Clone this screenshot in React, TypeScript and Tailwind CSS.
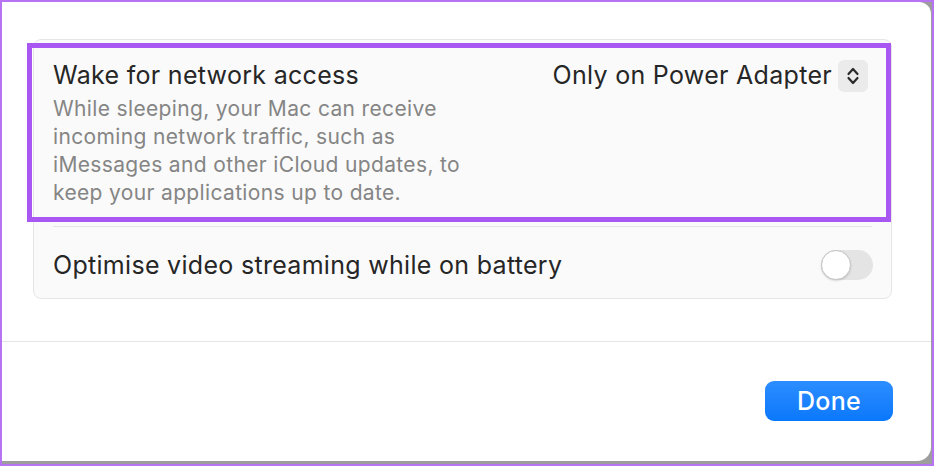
import React from "react";

function Stepper() {
  return (
    <span className="flex h-[32px] w-[30px] items-center justify-center rounded-[6px] bg-[#ebebeb]">
      <svg width="16" height="24" viewBox="0 0 16 24" fill="none">
        <path d="M3.5 10 L8 5 L12.5 10" stroke="#2b2b2b" strokeWidth="2.2" strokeLinecap="round" strokeLinejoin="round" />
        <path d="M3.5 14 L8 19 L12.5 14" stroke="#2b2b2b" strokeWidth="2.2" strokeLinecap="round" strokeLinejoin="round" />
      </svg>
    </span>
  );
}

function Toggle() {
  return (
    <span className="relative inline-flex h-[30px] w-[52px] items-center rounded-full bg-[#e4e4e4]">
      <span className="h-[30px] w-[30px] rounded-full border border-[#c4c4c4] bg-white shadow-[0_1px_2px_rgba(0,0,0,0.15)]" />
    </span>
  );
}

export default function App() {
  return (
    <div
      className="h-[466px] w-[934px] border-2 border-[#b673f3] bg-[#9d9d9d]"
      style={{ fontFamily: "Inter, 'Noto Sans', sans-serif" }}
    >
      <div className="mb-[3px] mr-[1px] flex h-[459px] flex-col rounded-br-[14px] rounded-tr-[12px] bg-white">
        {/* Settings group */}
        <div className="pl-[31px] pr-[39px] pt-[37px]">
          <div className="rounded-[8px] border border-[#e6e6e6] bg-[#fafafa]">
            <div className="relative flex justify-between pb-[19px] pl-[19px] pr-[23px] pt-[21px]">
              <div>
                <p className="text-[25px] leading-[28px] tracking-[0.3px] text-[#262626]">
                  Wake for network access
                </p>
                <p className="mt-[6px] whitespace-nowrap text-[21px] leading-[28px] tracking-[0.35px] text-[#858585]">
                  While sleeping, your Mac can receive
                  <br />
                  incoming network traffic, such as
                  <br />
                  iMessages and other iCloud updates, to
                  <br />
                  keep your applications up to date.
                </p>
              </div>
              <div className="-mt-[1px] flex h-[32px] items-center gap-[6px] self-start">
                <span className="-mt-[2px] text-[25px] leading-[28px] tracking-[0.3px] text-[#262626]">
                  Only on Power Adapter
                </span>
                <Stepper />
              </div>
              {/* annotation highlight */}
              <div className="pointer-events-none absolute bottom-[4px] left-[-7px] right-0 top-[3px] border-[5px] border-[#a957f3]" />
            </div>
            <div className="mx-[19px] h-px bg-[#e4e4e4]" />
            <div className="flex h-[71px] items-center justify-between pl-[19px] pr-[18px] pt-[5px]">
              <span className="text-[25px] leading-[28px] tracking-[0.3px] text-[#262626]">
                Optimise video streaming while on battery
              </span>
              <Toggle />
            </div>
          </div>
        </div>

        <div className="mt-[42px] h-px bg-[#e4e4e4]" />

        <div className="flex justify-end pr-[38px] pt-[39px]">
          <button className="h-[40px] w-[128px] rounded-[9px] bg-gradient-to-b from-[#2b8dff] to-[#0878fb] text-[25px] font-medium leading-[28px] tracking-[0.3px] text-white">
            Done
          </button>
        </div>
      </div>
    </div>
  );
}
